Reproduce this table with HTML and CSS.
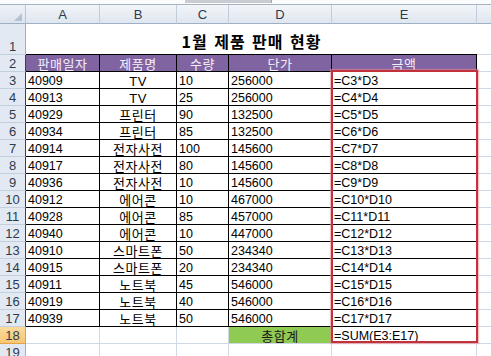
FILE: index.html
```html
<!DOCTYPE html>
<html lang="ko">
<head>
<meta charset="utf-8">
<link rel="stylesheet" href="styles.css">
</head>
<body>
<div class="sheet">
  <div class="topbar"><span class="tb-gap"></span><span class="tb-block"></span></div>
  <div class="grid">
    <div class="corner"><svg width="8" height="8" viewBox="0 0 8 8"><polygon points="8,0 8,8 0,8" fill="#b3c1d3"/></svg></div>
    <div class="ch">A</div><div class="ch">B</div><div class="ch">C</div><div class="ch">D</div><div class="ch">E</div><div class="ch last"></div>

    <div class="rh">1</div><div class="c title">1월 제품 판매 현황</div><div class="c f"></div>

    <div class="rh b">2</div><div class="c t hd">판매일자</div><div class="c t hd">제품명</div><div class="c t hd">수량</div><div class="c t hd">단가</div><div class="c t hd">금액</div><div class="c f"></div>

    <div class="rh b">3</div><div class="c t">40909</div><div class="c t ctr">TV</div><div class="c t">10</div><div class="c t">256000</div><div class="c t">=C3*D3</div><div class="c f"></div>
    <div class="rh b">4</div><div class="c t">40913</div><div class="c t ctr">TV</div><div class="c t">25</div><div class="c t">256000</div><div class="c t">=C4*D4</div><div class="c f"></div>
    <div class="rh b">5</div><div class="c t">40929</div><div class="c t ctr">프린터</div><div class="c t">90</div><div class="c t">132500</div><div class="c t">=C5*D5</div><div class="c f"></div>
    <div class="rh b">6</div><div class="c t">40934</div><div class="c t ctr">프린터</div><div class="c t">85</div><div class="c t">132500</div><div class="c t">=C6*D6</div><div class="c f"></div>
    <div class="rh b">7</div><div class="c t">40914</div><div class="c t ctr">전자사전</div><div class="c t">100</div><div class="c t">145600</div><div class="c t">=C7*D7</div><div class="c f"></div>
    <div class="rh b">8</div><div class="c t">40917</div><div class="c t ctr">전자사전</div><div class="c t">80</div><div class="c t">145600</div><div class="c t">=C8*D8</div><div class="c f"></div>
    <div class="rh b">9</div><div class="c t">40936</div><div class="c t ctr">전자사전</div><div class="c t">10</div><div class="c t">145600</div><div class="c t">=C9*D9</div><div class="c f"></div>
    <div class="rh b">10</div><div class="c t">40912</div><div class="c t ctr">에어콘</div><div class="c t">10</div><div class="c t">467000</div><div class="c t">=C10*D10</div><div class="c f"></div>
    <div class="rh b">11</div><div class="c t">40928</div><div class="c t ctr">에어콘</div><div class="c t">85</div><div class="c t">457000</div><div class="c t">=C11*D11</div><div class="c f"></div>
    <div class="rh b">12</div><div class="c t">40940</div><div class="c t ctr">에어콘</div><div class="c t">10</div><div class="c t">447000</div><div class="c t">=C12*D12</div><div class="c f"></div>
    <div class="rh b">13</div><div class="c t">40910</div><div class="c t ctr">스마트폰</div><div class="c t">50</div><div class="c t">234340</div><div class="c t">=C13*D13</div><div class="c f"></div>
    <div class="rh b">14</div><div class="c t">40915</div><div class="c t ctr">스마트폰</div><div class="c t">20</div><div class="c t">234340</div><div class="c t">=C14*D14</div><div class="c f"></div>
    <div class="rh b">15</div><div class="c t">40911</div><div class="c t ctr">노트북</div><div class="c t">45</div><div class="c t">546000</div><div class="c t">=C15*D15</div><div class="c f"></div>
    <div class="rh b">16</div><div class="c t">40919</div><div class="c t ctr">노트북</div><div class="c t">40</div><div class="c t">546000</div><div class="c t">=C16*D16</div><div class="c f"></div>
    <div class="rh b">17</div><div class="c t">40939</div><div class="c t ctr">노트북</div><div class="c t">50</div><div class="c t">546000</div><div class="c t">=C17*D17</div><div class="c f"></div>

    <div class="rh sel">18</div><div class="c"></div><div class="c"></div><div class="c"></div><div class="c sum ctr">총합계</div><div class="c">=SUM(E3:E17)</div><div class="c f"></div>
    <div class="rh">19</div><div class="c"></div><div class="c"></div><div class="c"></div><div class="c"></div><div class="c"></div><div class="c f"></div>
  </div>
  <div class="sel-box"></div>
</div>
</body>
</html>
```

FILE: styles.css
```css
html, body {
  margin: 0;
  padding: 0;
  background: #ffffff;
  overflow: hidden;
}

.sheet {
  position: relative;
  width: 491px;
  height: 356px;
  overflow: hidden;
}

.topbar {
  display: flex;
  height: 5px;
  box-sizing: border-box;
  background: #fbfcfd;
  border-bottom: 1px solid #a7b2c0;
}

.tb-gap { width: 185px; }

.tb-block {
  width: 86px;
  height: 3px;
  background: #c9cdd3;
  border-right: 1px solid #9aa3ae;
}

.grid {
  display: grid;
  grid-template-columns: 26px 74px 77px 52px 103px 145px 1fr;
  grid-template-rows: 19px 31px repeat(18, 17px);
}

.grid > div {
  box-sizing: border-box;
  border-right: 1px solid #d0d7e5;
  border-bottom: 1px solid #d0d7e5;
  min-width: 0;
}

.corner {
  display: flex;
  align-items: flex-end;
  justify-content: flex-end;
  padding: 0 3px 2px 0;
  background: linear-gradient(#eef2f7, #dde4ed);
  border-bottom-color: #9eb0c4 !important;
  border-right-color: #b8c5d3 !important;
}

.corner svg { display: block; }

.ch {
  display: flex;
  align-items: center;
  justify-content: center;
  background: linear-gradient(#f2f5f9, #dfe6ef);
  border-right-color: #c2ccd9 !important;
  border-bottom-color: #9eb0c4 !important;
  font: 13px/1 "Liberation Sans", sans-serif;
  color: #2f3b4d;
}

.ch.last { border-right: none !important; }

.rh {
  display: flex;
  align-items: flex-end;
  justify-content: center;
  background: #e2e9f3;
  border-right-color: #9eb0c4 !important;
  border-bottom-color: #c3cfdd !important;
  font: 13px/14px "Liberation Sans", sans-serif;
  color: #2f3b4d;
  padding-bottom: 0;
}

.rh.b { border-right-color: #3a3f48 !important; }

.rh.sel {
  background: linear-gradient(#fadb9c, #f6c673);
  border-bottom-color: #e3a548 !important;
  border-right-color: #d9a050 !important;
}

.c {
  display: flex;
  align-items: flex-end;
  padding: 0 2px;
  white-space: nowrap;
  overflow: hidden;
  font: 12.5px/13px "Liberation Sans", "Noto Sans CJK KR", sans-serif;
  color: #000000;
}

.c.ctr {
  justify-content: center;
  font-size: 13px;
  letter-spacing: 0.5px;
}

.c.title {
  grid-column: 2 / 7;
  justify-content: center;
  padding-bottom: 4px;
  border-right: none !important;
  border-bottom-color: #000000 !important;
  font: 700 16px/18px "Noto Sans CJK KR", sans-serif;
  letter-spacing: 1px;
  word-spacing: 1px;
}

.c.t {
  border-right-color: #000000 !important;
  border-bottom-color: #000000 !important;
}

.c.hd {
  justify-content: center;
  background: #8064a2;
  color: #f3eefa;
  font-size: 13px;
  letter-spacing: 0.5px;
}

.c.sum {
  background: #8fca52;
  color: #1a1a1a;
}

.c.f { border-right: none !important; }

.sel-box {
  position: absolute;
  left: 331px;
  top: 70px;
  width: 147px;
  height: 273px;
  box-sizing: border-box;
  border: 2px solid #c2323d;
  box-shadow: 0 0 1px 1px rgba(235, 140, 150, 0.55);
  pointer-events: none;
}
```
